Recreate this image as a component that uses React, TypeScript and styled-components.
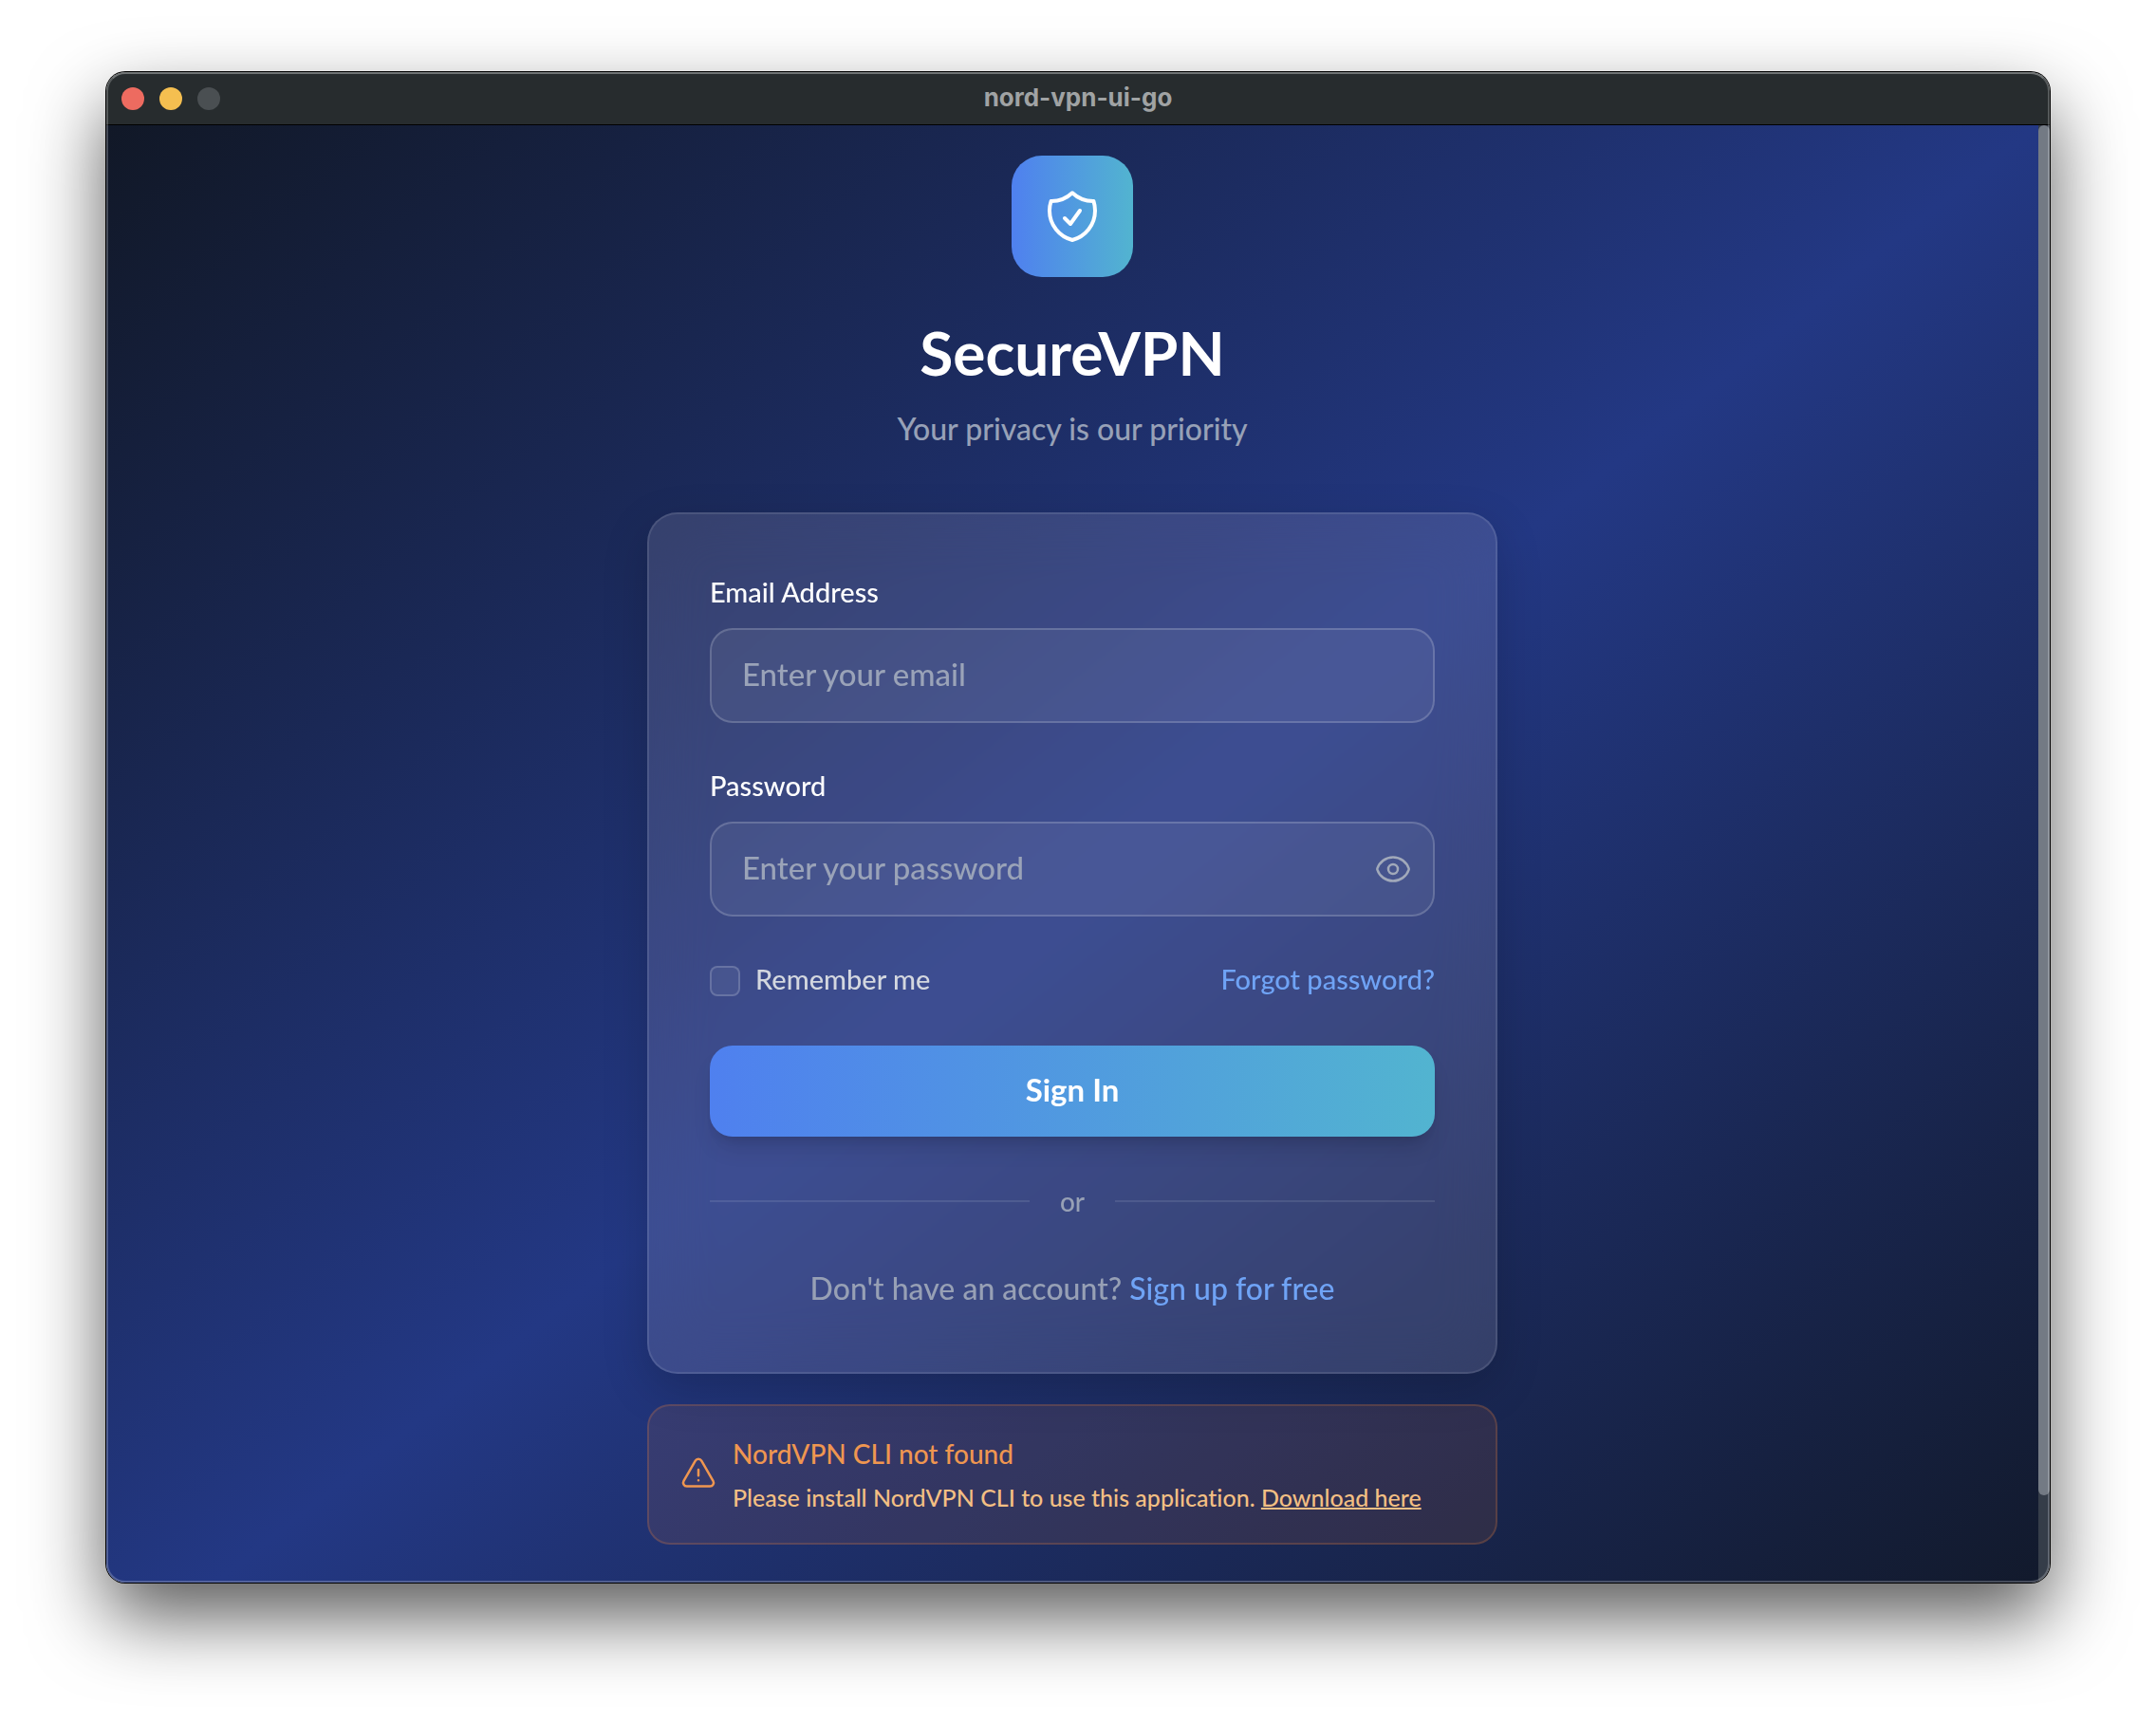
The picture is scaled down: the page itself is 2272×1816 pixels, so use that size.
import React, { useState } from "react";
import styled, { createGlobalStyle } from "styled-components";
import {
  HiOutlineEye,
  HiOutlineExclamationTriangle,
  HiOutlineShieldCheck,
} from "react-icons/hi2";

const GlobalStyle = createGlobalStyle`
  *, *::before, *::after { box-sizing: border-box; }
  body {
    margin: 0;
    background: #ffffff;
    font-family: Lato, "Open Sans", sans-serif;
    font-size: 33px;
    font-weight: 500;
    line-height: 48px;
    font-variant-ligatures: none;
  }
  h1, h2, p { margin: 0; }
  input, button { font: inherit; }
`;

const accent = "linear-gradient(to right, #4f80ef, #52b4d0)";

const Desktop = styled.div`
  display: flex;
  min-height: 100vh;
  padding: 76px 112px 148px;
`;

const Window = styled.div`
  position: relative;
  display: flex;
  flex: 1;
  flex-direction: column;
  overflow: hidden;
  border-radius: 20px;
  box-shadow: 0 0 0 1px #000000, 0 36px 80px rgba(0, 0, 0, 0.65);

  &::after {
    content: "";
    position: absolute;
    inset: 0;
    border: 2px solid rgba(255, 255, 255, 0.22);
    border-top-color: rgba(255, 255, 255, 0.34);
    border-radius: 20px;
    pointer-events: none;
  }
`;

const TitleBar = styled.header`
  display: grid;
  grid-template-columns: 1fr auto 1fr;
  align-items: center;
  height: 56px;
  padding: 0 16px;
  border-bottom: 1px solid #000000;
  background: #272c2e;
`;

const Lights = styled.div`
  display: flex;
  gap: 16px;
`;

const Light = styled.button<{ $color: string }>`
  width: 24px;
  height: 24px;
  padding: 0;
  border: 0;
  border-radius: 50%;
  background: ${(p) => p.$color};
`;

const WindowTitle = styled.div`
  padding-bottom: 2px;
  color: #a0a3a4;
  font-family: Inter, sans-serif;
  font-size: 26px;
  font-weight: 700;
  line-height: 32px;
`;

const Viewport = styled.div`
  display: flex;
  flex: 1;
`;

const Page = styled.main`
  display: flex;
  flex: 1;
  flex-direction: column;
  align-items: center;
  padding: 32px 32px 40px;
  background: linear-gradient(to bottom right, #111827, #233884, #111827) 0 0 / 100% 106% no-repeat;
`;

const ScrollTrack = styled.div`
  width: 12px;
  background: #353d49;
`;

const ScrollThumb = styled.div`
  height: 94%;
  border-radius: 6px;
  background: #737a84;
`;

const Column = styled.div`
  width: 100%;
  max-width: 896px;
`;

const Brand = styled.div`
  display: flex;
  flex-direction: column;
  align-items: center;
  margin-bottom: 64px;
`;

const Logo = styled.div`
  display: flex;
  align-items: center;
  justify-content: center;
  width: 128px;
  height: 128px;
  margin-bottom: 48px;
  border-radius: 32px;
  background: ${accent};
  color: #ffffff;
  font-size: 64px;
`;

const BrandName = styled.h1`
  margin-bottom: 24px;
  color: #ffffff;
  font-size: 64px;
  font-weight: 700;
  line-height: 64px;
`;

const Tagline = styled.p`
  color: #97a1b7;
  font-size: 32px;
`;

const Card = styled.form`
  display: flex;
  flex-direction: column;
  gap: 48px;
  margin-bottom: 32px;
  padding: 64px;
  border: 2px solid rgba(255, 255, 255, 0.1);
  border-radius: 32px;
  background: rgba(255, 240, 255, 0.12);
  backdrop-filter: blur(32px);
  box-shadow: 0 16px 48px rgba(0, 0, 0, 0.18);
`;

const Field = styled.div`
  display: flex;
  flex-direction: column;
  gap: 20px;
`;

const FieldLabel = styled.label`
  color: #ffffff;
  font-size: 29px;
  line-height: 36px;
`;

const InputShell = styled.div`
  display: flex;
  align-items: center;
  height: 100px;
  padding: 0 22px 0 32px;
  border: 2px solid rgba(255, 255, 255, 0.18);
  border-radius: 24px;
  background: rgba(255, 255, 255, 0.06);
`;

const TextInput = styled.input`
  flex: 1;
  min-width: 0;
  height: 48px;
  padding: 0 0 4px;
  border: 0;
  outline: 0;
  background: transparent;
  color: #ffffff;

  &::placeholder {
    color: #9aa3b8;
    opacity: 1;
  }
`;

const RevealButton = styled.button`
  display: flex;
  padding: 0;
  border: 0;
  background: none;
  color: #a1a9ba;
  font-size: 40px;
  line-height: 40px;
`;

const Options = styled.div`
  display: flex;
  align-items: center;
  justify-content: space-between;
  height: 40px;
  font-size: 29px;
  line-height: 36px;
`;

const Remember = styled.label`
  display: flex;
  align-items: center;
  gap: 16px;
  color: #d3d7df;
`;

const OptionText = styled.span`
  padding-bottom: 4px;
`;

const Checkbox = styled.input`
  appearance: none;
  width: 32px;
  height: 32px;
  margin: 0;
  border: 2px solid rgba(255, 255, 255, 0.18);
  border-radius: 8px;
  background: rgba(255, 255, 255, 0.06);

  &:checked {
    background: #4f80ef;
  }
`;

const BlueLink = styled.a`
  color: #6fa3f5;
  text-decoration: none;
`;

const SubmitButton = styled.button`
  height: 96px;
  padding: 0 0 4px;
  border: 0;
  border-radius: 24px;
  background: ${accent};
  box-shadow: 0 16px 24px -6px rgba(0, 0, 0, 0.14), 0 8px 12px -8px rgba(0, 0, 0, 0.14);
  color: #ffffff;
  font-weight: 700;
`;

const Divider = styled.div`
  display: flex;
  align-items: center;
  gap: 32px;
  color: #97a0b5;
  font-size: 28px;
  line-height: 40px;

  &::before,
  &::after {
    content: "";
    flex: 1;
    height: 2px;
    background: rgba(255, 255, 255, 0.1);
  }
`;

const SignUp = styled.p`
  color: #97a0b5;
  font-size: 32px;
  text-align: center;
`;

const Alert = styled.section`
  display: flex;
  align-items: center;
  gap: 16px;
  padding: 32px;
  border: 2px solid rgba(238, 132, 60, 0.22);
  border-radius: 24px;
  background: rgba(238, 132, 60, 0.11);
  color: #ef9650;
`;

const AlertIcon = styled.div`
  display: flex;
  font-size: 40px;
`;

const AlertTitle = styled.h2`
  margin-bottom: 12px;
  font-size: 28px;
  font-weight: 500;
  line-height: 36px;
`;

const AlertText = styled.p`
  color: #f3bf83;
  font-size: 25px;
  line-height: 32px;
`;

const AlertLink = styled.a`
  color: inherit;
  text-decoration: underline;
  text-decoration-thickness: 2px;
`;

export default function App() {
  const [revealed, setRevealed] = useState(false);

  return (
    <>
      <GlobalStyle />
      <Desktop>
        <Window>
          <TitleBar>
            <Lights>
              <Light type="button" aria-label="Close" $color="#ed6b60" />
              <Light type="button" aria-label="Minimize" $color="#f5bf50" />
              <Light type="button" aria-label="Zoom" disabled $color="#4a4f52" />
            </Lights>
            <WindowTitle>nord-vpn-ui-go</WindowTitle>
          </TitleBar>
          <Viewport>
            <Page>
              <Column>
                <Brand>
                  <Logo>
                    <HiOutlineShieldCheck />
                  </Logo>
                  <BrandName>SecureVPN</BrandName>
                  <Tagline>Your privacy is our priority</Tagline>
                </Brand>

                <Card onSubmit={(e) => e.preventDefault()}>
                  <Field>
                    <FieldLabel htmlFor="email">Email Address</FieldLabel>
                    <InputShell>
                      <TextInput id="email" type="email" placeholder="Enter your email" />
                    </InputShell>
                  </Field>
                  <Field>
                    <FieldLabel htmlFor="password">Password</FieldLabel>
                    <InputShell>
                      <TextInput
                        id="password"
                        type={revealed ? "text" : "password"}
                        placeholder="Enter your password"
                      />
                      <RevealButton
                        type="button"
                        aria-label="Show password"
                        aria-pressed={revealed}
                        onClick={() => setRevealed(!revealed)}
                      >
                        <HiOutlineEye />
                      </RevealButton>
                    </InputShell>
                  </Field>
                  <Options>
                    <Remember htmlFor="remember">
                      <Checkbox id="remember" type="checkbox" />
                      <OptionText>Remember me</OptionText>
                    </Remember>
                    <OptionText>
                      <BlueLink href="#forgot">Forgot password?</BlueLink>
                    </OptionText>
                  </Options>
                  <SubmitButton type="submit">Sign In</SubmitButton>
                  <Divider>or</Divider>
                  <SignUp>
                    Don't have an account? <BlueLink href="#signup">Sign up for free</BlueLink>
                  </SignUp>
                </Card>

                <Alert>
                  <AlertIcon>
                    <HiOutlineExclamationTriangle />
                  </AlertIcon>
                  <div>
                    <AlertTitle>NordVPN CLI not found</AlertTitle>
                    <AlertText>
                      Please install NordVPN CLI to use this application.{" "}
                      <AlertLink href="#download">Download here</AlertLink>
                    </AlertText>
                  </div>
                </Alert>
              </Column>
            </Page>
            <ScrollTrack aria-hidden="true">
              <ScrollThumb />
            </ScrollTrack>
          </Viewport>
        </Window>
      </Desktop>
    </>
  );
}
